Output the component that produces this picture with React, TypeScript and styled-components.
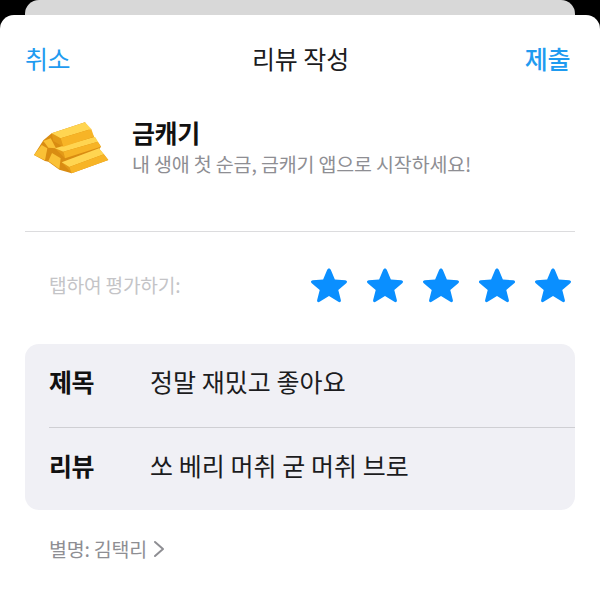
import React from "react";
import styled, { createGlobalStyle } from "styled-components";

const GlobalStyle = createGlobalStyle`
  html, body {
    margin: 0;
    padding: 0;
    background: #000;
  }
  body {
    font-family: "Noto Sans CJK KR", "Noto Sans", sans-serif;
  }
`;

const Page = styled.div`
  width: 600px;
  height: 590px;
  overflow: hidden;
  background: #000;
`;

const BackCard = styled.div`
  height: 15px;
  margin: 0 25px;
  background: #d8d8d8;
  border-radius: 14px 14px 0 0;
`;

const Sheet = styled.div`
  height: 575px;
  box-sizing: border-box;
  padding: 0 25px;
  background: #fff;
  border-radius: 14px 14px 0 0;
`;

const NavBar = styled.div`
  height: 86px;
  display: flex;
  align-items: center;
  justify-content: space-between;
  padding-right: 5px;
`;

const NavButton = styled.span<{ $bold?: boolean }>`
  font-size: 25px;
  line-height: 32px;
  letter-spacing: -0.4px;
  color: #1f9bf0;
  font-weight: ${(p) => (p.$bold ? 500 : 400)};
`;

const NavTitle = styled.span`
  margin-left: 6px;
  font-size: 25px;
  line-height: 32px;
  letter-spacing: -0.1px;
  color: #1c1c1e;
`;

const AppRow = styled.div`
  height: 130px;
  display: flex;
  align-items: flex-start;
  gap: 12px;
  border-bottom: 1px solid #dcdcde;
`;

const AppIcon = styled.svg`
  width: 100px;
  height: 80px;
  flex: none;
  margin: 4px 0 0 -5px;
`;

const AppText = styled.div`
  display: flex;
  flex-direction: column;
  padding-top: 14px;
`;

const AppName = styled.div`
  font-size: 25px;
  line-height: 34px;
  font-weight: 700;
  letter-spacing: -0.4px;
  color: #111;
`;

const AppTagline = styled.div`
  font-size: 19.5px;
  line-height: 30px;
  letter-spacing: -0.15px;
  color: #8e8e93;
`;

const RatingRow = styled.div`
  height: 112px;
  padding: 0 0 6px 24px;
  box-sizing: border-box;
  display: flex;
  align-items: center;
  justify-content: space-between;
`;

const RatingLabel = styled.span`
  font-size: 19.2px;
  letter-spacing: -0.2px;
  color: #c4c4c7;
`;

const Stars = styled.div`
  display: flex;
  gap: 18px;
  margin-right: 3px;
`;

const Star = styled.svg`
  width: 38px;
  height: 36px;
  display: block;
  fill: #0a8fff;
`;

const FormCard = styled.div`
  height: 166px;
  padding-left: 24px;
  background: #f0f0f5;
  border-radius: 14px;
`;

const FormRow = styled.div<{ $divider?: boolean }>`
  height: 83px;
  box-sizing: border-box;
  padding-bottom: 9px;
  display: flex;
  align-items: center;
  border-top: ${(p) => (p.$divider ? "1px solid #cfcfd3" : "none")};
`;

const FormLabel = styled.span`
  width: 101px;
  flex: none;
  font-size: 25px;
  font-weight: 700;
  letter-spacing: -0.4px;
  color: #111;
`;

const FormValue = styled.span`
  font-size: 25px;
  letter-spacing: 0.05px;
  color: #1c1c1e;
`;

const Nickname = styled.div`
  display: flex;
  align-items: center;
  gap: 6px;
  margin-top: 26px;
  padding-left: 24px;
  font-size: 19.5px;
  line-height: 26px;
  letter-spacing: -0.2px;
  color: #8e8e93;
`;

const STAR_PATH =
  "M19 1.6c1 0 1.6.6 2 1.6l4.2 10.1 11 .8c1.9.2 2.5 1.9 1 3.1l-8.4 7 2.7 10.6c.5 1.8-1 2.9-2.6 2L19 30.6l-9.9 6.2c-1.6.9-3.1-.2-2.6-2l2.7-10.6-8.4-7c-1.5-1.2-.9-2.9 1-3.1l11-.8L17 3.2c.4-1 1-1.6 2-1.6z";

// bars of the stack, back to front; coordinates are in the icon's own 300x240 box
const PILE_OUTLINE = "M42 150L70 106L95 85L195 52L222 95L243 125L238 132L265 165L155 205L118 194L85 170L75 168Z";

const LONG_BARS = [
  { top: "M125 172L237 130L252 148L148 186Z", front: "M148 186L252 148L265 165L155 205Z", end: "M125 172L148 186L155 205Z" },
  { top: "M105 130L225 95L234 110L130 140Z", front: "M130 140L234 110L243 125L135 160Z", end: "M105 130L130 140L135 160Z" },
  { top: "M95 85L195 52L214 72L122 100Z", front: "M122 100L214 72L222 95L130 125Z", end: "M95 85L122 100L130 125L100 108Z" },
];

const SHORT_BARS = [
  "M70 108L92 100L108 130L85 128Z",
  "M42 150L65 120L82 130L75 166Z",
  "M85 168L96 144L122 160L118 192Z",
];

const GoldIcon = () => (
  <AppIcon viewBox="0 0 300 240">
    <path d={PILE_OUTLINE} fill="#d98c12" />
    {SHORT_BARS.map((d) => (
      <path key={d} d={d} fill="#fac136" />
    ))}
    {LONG_BARS.map((b) => (
      <g key={b.top}>
        <path d={b.end} fill="#e39a18" />
        <path d={b.top} fill="#ffd551" />
        <path d={b.front} fill="#f7b426" />
      </g>
    ))}
  </AppIcon>
);

const App = () => {
  return (
    <Page>
      <GlobalStyle />
      <BackCard />
      <Sheet>
        <NavBar>
          <NavButton>취소</NavButton>
          <NavTitle>리뷰 작성</NavTitle>
          <NavButton $bold>제출</NavButton>
        </NavBar>
        <AppRow>
          <GoldIcon />
          <AppText>
            <AppName>금캐기</AppName>
            <AppTagline>내 생애 첫 순금, 금캐기 앱으로 시작하세요!</AppTagline>
          </AppText>
        </AppRow>
        <RatingRow>
          <RatingLabel>탭하여 평가하기:</RatingLabel>
          <Stars>
            {[0, 1, 2, 3, 4].map((i) => (
              <Star key={i} viewBox="0 0 38 38">
                <path d={STAR_PATH} />
              </Star>
            ))}
          </Stars>
        </RatingRow>
        <FormCard>
          <FormRow>
            <FormLabel>제목</FormLabel>
            <FormValue>정말 재밌고 좋아요</FormValue>
          </FormRow>
          <FormRow $divider>
            <FormLabel>리뷰</FormLabel>
            <FormValue>쏘 베리 머취 굳 머취 브로</FormValue>
          </FormRow>
        </FormCard>
        <Nickname>
          별명: 김택리
          <svg width="12" height="18" viewBox="0 0 12 18" fill="none">
            <path d="M2 2l8 7-8 7" stroke="#8e8e93" strokeWidth="2" strokeLinecap="round" strokeLinejoin="round" />
          </svg>
        </Nickname>
      </Sheet>
    </Page>
  );
};

export default App;
